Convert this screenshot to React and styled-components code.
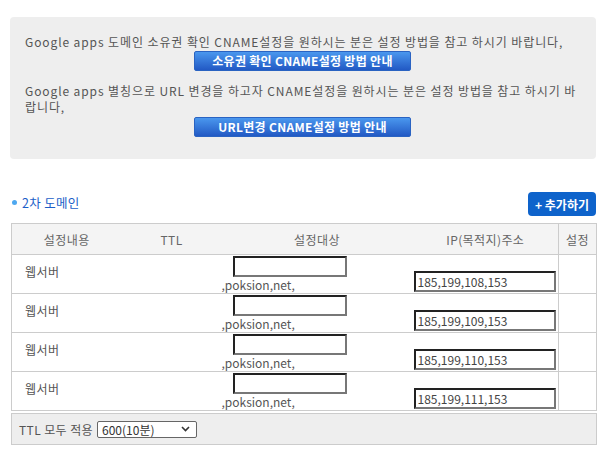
import React from "react";
import styled, { createGlobalStyle } from "styled-components";

const GlobalStyle = createGlobalStyle`
  body {
    margin: 0;
    background: #ffffff;
    font-family: "Noto Sans CJK KR", "Noto Sans", sans-serif;
    color: #555555;
  }
`;

const Page = styled.div`
  padding: 17px 12px 0 10px;
  font-size: 12px;
`;

const InfoPanel = styled.div`
  background: #eeeeee;
  border-radius: 4px;
  padding: 17px 16px 22px 15px;
  line-height: 16px;
  word-break: break-all;
  letter-spacing: 0.9px;
`;

const InfoText = styled.p`
  margin: ${(p) => (p.$first ? "0" : "12px 0 0")};
`;

const GuideButton = styled.button`
  display: block;
  width: 217px;
  height: 20px;
  margin: ${(p) => p.$gap || 1}px auto 0;
  padding: 0;
  border: 1px solid #2a63c2;
  border-radius: 2px;
  background: linear-gradient(#4a97ee, #2259c4);
  color: #ffffff;
  font-family: inherit;
  font-size: 12px;
  font-weight: 700;
  letter-spacing: 0.3px;
  line-height: 18px;
`;

const SectionHeader = styled.div`
  display: flex;
  justify-content: space-between;
  align-items: flex-start;
  margin: 33px 0 7px;
`;

const SectionTitle = styled.div`
  display: flex;
  align-items: center;
  gap: 5px;
  margin: 1px 0 0 2px;
  color: #1b5ec8;
  font-size: 12.5px;
  letter-spacing: 0.3px;

  &::before {
    content: "";
    width: 5px;
    height: 5px;
    border-radius: 50%;
    background: #4ea8f0;
  }
`;

const AddButton = styled.button`
  width: 68px;
  height: 24px;
  padding: 0;
  border: none;
  border-radius: 4px;
  background: #0e63cb;
  color: #ffffff;
  font-family: inherit;
  font-size: 12px;
  font-weight: 700;
`;

const Table = styled.table`
  width: 586px;
  margin-left: 1px;
  border-collapse: collapse;
  table-layout: fixed;
  border: 1px solid #cccccc;
`;

const HeadCell = styled.th`
  height: 30px;
  padding: 0;
  background: #f4f4f4;
  border-bottom: 1px solid #cccccc;
  border-right: ${(p) => (p.$divider ? "1px solid #cccccc" : "none")};
  color: #666666;
  font-weight: 400;
  font-size: 12px;
  text-align: center;
  letter-spacing: 0.4px;
`;

const Row = styled.tr`
  height: 39px;
  border-bottom: 1px solid #cccccc;
`;

const Cell = styled.td`
  padding: 0;
  vertical-align: ${(p) => p.$align || "top"};
  border-right: ${(p) => (p.$divider ? "1px solid #cccccc" : "none")};
  font-size: 12px;
`;

const Label = styled.div`
  padding: 8px 0 0 13px;
  color: #555555;
  letter-spacing: 0.4px;
`;

const TargetBox = styled.div`
  display: flex;
  flex-direction: column;
  align-items: flex-start;
  padding-top: 1px;
  line-height: 16px;
`;

const TextInput = styled.input`
  box-sizing: border-box;
  width: ${(p) => p.$width}px;
  height: 21px;
  margin-left: ${(p) => p.$indent || 0}px;
  padding: 0 2px;
  border: 2px solid;
  border-color: #222222 #777777 #777777 #222222;
  background: #ffffff;
  font-family: "Noto Sans CJK KR", sans-serif;
  font-size: 12px;
  color: #444444;
  outline: none;
`;

const IpBox = styled.div`
  padding: 0 0 1px 1px;
  display: flex;
`;

const BottomBar = styled.div`
  display: flex;
  align-items: center;
  gap: 4px;
  box-sizing: border-box;
  width: 586px;
  height: 32px;
  margin: 2px 0 0 1px;
  padding-left: 7px;
  background: #eeeeee;
  border: 1px solid #cccccc;
  color: #555555;
  letter-spacing: 0.4px;
`;

const SelectBox = styled.div`
  display: flex;
  align-items: center;
  justify-content: space-between;
  box-sizing: border-box;
  width: 100px;
  height: 17px;
  padding: 0 6px 0 4px;
  border: 1px solid #666666;
  border-radius: 2px;
  background: #ffffff;
  color: #333333;
  font-size: 12px;
  letter-spacing: 0;
`;

const rows = ["185,199,108,153", "185,199,109,153", "185,199,110,153", "185,199,111,153"];

const Chevron = () => (
  <svg width="9" height="6" viewBox="0 0 9 6">
    <path d="M1 1 L4.5 4.5 L8 1" fill="none" stroke="#333" strokeWidth="1.6" />
  </svg>
);

export default function App() {
  return (
    <Page>
      <GlobalStyle />
      <InfoPanel>
        <InfoText $first>
          Google apps 도메인 소유권 확인 CNAME설정을 원하시는 분은 설정 방법을 참고 하시기 바랍니다,
        </InfoText>
        <GuideButton>소유권 확인 CNAME설정 방법 안내</GuideButton>
        <InfoText>
          Google apps 별칭으로 URL 변경을 하고자 CNAME설정을 원하시는 분은 설정 방법을 참고 하시기 바랍니다,
        </InfoText>
        <GuideButton $gap={2}>URL변경 CNAME설정 방법 안내</GuideButton>
      </InfoPanel>

      <SectionHeader>
        <SectionTitle>2차 도메인</SectionTitle>
        <AddButton>+ 추가하기</AddButton>
      </SectionHeader>

      <Table>
        <colgroup>
          <col style={{ width: 110 }} />
          <col style={{ width: 100 }} />
          <col style={{ width: 191 }} />
          <col style={{ width: 146 }} />
          <col style={{ width: 38 }} />
        </colgroup>
        <thead>
          <tr>
            <HeadCell>설정내용</HeadCell>
            <HeadCell>TTL</HeadCell>
            <HeadCell>설정대상</HeadCell>
            <HeadCell $divider>IP(목적지)주소</HeadCell>
            <HeadCell>설정</HeadCell>
          </tr>
        </thead>
        <tbody>
          {rows.map((ip) => (
            <Row key={ip}>
              <Cell>
                <Label>웹서버</Label>
              </Cell>
              <Cell />
              <Cell>
                <TargetBox>
                  <TextInput $width={114} $indent={11} defaultValue="" />
                  <span>,poksion,net,</span>
                </TargetBox>
              </Cell>
              <Cell $divider $align="bottom">
                <IpBox>
                  <TextInput $width={142} defaultValue={ip} />
                </IpBox>
              </Cell>
              <Cell />
            </Row>
          ))}
        </tbody>
      </Table>

      <BottomBar>
        TTL 모두 적용
        <SelectBox>
          600(10분)
          <Chevron />
        </SelectBox>
      </BottomBar>
    </Page>
  );
}
